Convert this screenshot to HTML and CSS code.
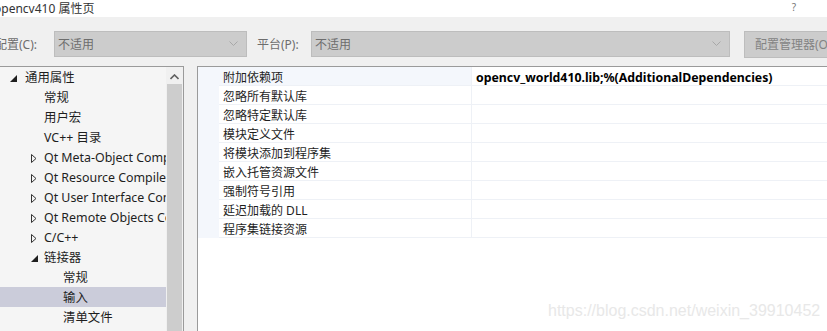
FILE: index.html
```html
<!DOCTYPE html>
<html lang="zh-CN">
<head>
    <meta charset="UTF-8">
    <title>opencv410 属性页</title>
    <link rel="stylesheet" href="styles.css">
</head>
<body>
    <!-- window title -->
    <div class="titlebar">
        <span class="title">opencv410 属性页</span>
        <span class="help">?</span>
    </div>

    <!-- configuration / platform selectors -->
    <div class="toolbar">
        <span class="tb-label cfg-label">配置(C):</span>
        <div class="combo combo-cfg">
            <span>不适用</span>
            <svg class="chevron" width="9" height="6" viewBox="0 0 9 6"><path d="M0.5 0.5 L4.5 4.5 L8.5 0.5" fill="none" stroke="#a8a8a8" stroke-width="1"/></svg>
        </div>
        <span class="tb-label plat-label">平台(P):</span>
        <div class="combo combo-plat">
            <span>不适用</span>
            <svg class="chevron" width="9" height="6" viewBox="0 0 9 6"><path d="M0.5 0.5 L4.5 4.5 L8.5 0.5" fill="none" stroke="#a8a8a8" stroke-width="1"/></svg>
        </div>
        <button class="cfg-manager">配置管理器(O)</button>
    </div>

    <div class="panes">
        <!-- property tree -->
        <div class="tree-pane">
            <ul class="tree">
                <li class="node lvl0"><svg class="exp" width="7" height="7" viewBox="0 0 7 7"><path d="M7 0 L7 7 L0 7 Z" fill="#1e1e1e"/></svg>通用属性</li>
                <li class="node lvl1">常规</li>
                <li class="node lvl1">用户宏</li>
                <li class="node lvl1">VC++ 目录</li>
                <li class="node lvl1"><svg class="col" width="6" height="9" viewBox="0 0 6 9"><path d="M0.5 0.5 L5 4.5 L0.5 8.5 Z" fill="none" stroke="#333" stroke-width="1"/></svg>Qt Meta-Object Compiler</li>
                <li class="node lvl1"><svg class="col" width="6" height="9" viewBox="0 0 6 9"><path d="M0.5 0.5 L5 4.5 L0.5 8.5 Z" fill="none" stroke="#333" stroke-width="1"/></svg>Qt Resource Compiler</li>
                <li class="node lvl1"><svg class="col" width="6" height="9" viewBox="0 0 6 9"><path d="M0.5 0.5 L5 4.5 L0.5 8.5 Z" fill="none" stroke="#333" stroke-width="1"/></svg>Qt User Interface Compiler</li>
                <li class="node lvl1"><svg class="col" width="6" height="9" viewBox="0 0 6 9"><path d="M0.5 0.5 L5 4.5 L0.5 8.5 Z" fill="none" stroke="#333" stroke-width="1"/></svg>Qt Remote Objects Compiler</li>
                <li class="node lvl1"><svg class="col" width="6" height="9" viewBox="0 0 6 9"><path d="M0.5 0.5 L5 4.5 L0.5 8.5 Z" fill="none" stroke="#333" stroke-width="1"/></svg>C/C++</li>
                <li class="node lvl1"><svg class="col exp-small" width="7" height="7" viewBox="0 0 7 7"><path d="M7 0 L7 7 L0 7 Z" fill="#1e1e1e"/></svg>链接器</li>
                <li class="node lvl2">常规</li>
                <li class="node lvl2 selected">输入</li>
                <li class="node lvl2">清单文件</li>
            </ul>
            <div class="scrollbar">
                <svg class="arrow-up" width="9" height="6" viewBox="0 0 9 6"><path d="M0.5 5 L4.5 1 L8.5 5" fill="none" stroke="#606060" stroke-width="1.6"/></svg>
                <div class="thumb"></div>
            </div>
        </div>

        <!-- property grid -->
        <div class="grid-pane">
            <div class="grid">
                <div class="gutter"></div>
                <div class="name first">附加依赖项</div><div class="value"><b>opencv_world410.lib;%(AdditionalDependencies)</b></div>
                <div class="name">忽略所有默认库</div><div class="value"></div>
                <div class="name">忽略特定默认库</div><div class="value"></div>
                <div class="name">模块定义文件</div><div class="value"></div>
                <div class="name">将模块添加到程序集</div><div class="value"></div>
                <div class="name">嵌入托管资源文件</div><div class="value"></div>
                <div class="name">强制符号引用</div><div class="value"></div>
                <div class="name">延迟加载的 DLL</div><div class="value"></div>
                <div class="name">程序集链接资源</div><div class="value"></div>
            </div>
        </div>
    </div>

    <div class="watermark">https://blog.csdn.net/weixin_39910452</div>
</body>
</html>
```

FILE: styles.css
```css
/* dialog page */
body {
    margin: 0;
    width: 827px;
    height: 331px;
    overflow: hidden;
    position: relative;
    background-color: #f0f0f0;
    font-family: "Noto Sans", "Noto Sans CJK SC", sans-serif;
    font-size: 12px;
    color: #1e1e1e;
}

.titlebar {
    height: 17px;
    background-color: #ffffff;
    display: flex;
    align-items: center;
    justify-content: space-between;
}

.title {
    margin-left: -6px;
    margin-top: -2px;
    color: #333333;
}

.help {
    margin-right: 31px;
    font-size: 10px;
    line-height: 12px;
    color: #777777;
    margin-top: -4px;
}

.toolbar {
    display: flex;
    align-items: center;
    height: 26px;
    margin-top: 14px;
    white-space: nowrap;
}

.tb-label {
    color: #6d6d6d;
    flex-shrink: 0;
}

.cfg-label {
    margin-left: -5px;
    width: 59px;
}

.plat-label {
    margin-left: 10px;
    width: 54px;
}

.combo {
    box-sizing: border-box;
    flex-shrink: 0;
    height: 26px;
    background-color: #cccccc;
    border: 1px solid #bdbdbd;
    display: flex;
    align-items: center;
    justify-content: space-between;
    padding: 0 8px 0 3px;
    color: #6d6d6d;
}

.combo-cfg {
    width: 193px;
}

.combo-plat {
    width: 419px;
}

.cfg-manager {
    box-sizing: border-box;
    margin-left: 14px;
    height: 27px;
    padding: 0 0 0 10px;
    width: 110px;
    text-align: left;
    background-color: #cccccc;
    border: 1px solid #bdbdbd;
    font-family: inherit;
    font-size: 12px;
    color: #838383;
    flex-shrink: 0;
}

.panes {
    display: flex;
    margin-top: 9px;
    height: 265px;
}

.tree-pane {
    width: 183px;
    border-top: 1px solid #9a9a9a;
    border-right: 1px solid #9a9a9a;
    display: flex;
    background-color: #f5f5f5;
}

.tree {
    list-style: none;
    margin: 0;
    padding: 0;
    width: 166px;
    overflow: hidden;
    font-size: 12.4px;
}

.node {
    box-sizing: border-box;
    height: 20px;
    padding-top: 2px;
    line-height: 18px;
    white-space: nowrap;
    display: flex;
    align-items: center;
}

.node svg {
    flex-shrink: 0;
}

.lvl0 {
    padding-left: 10px;
}

.lvl0 .exp {
    margin-right: 8px;
}

.lvl1 {
    padding-left: 44px;
}

.lvl2 {
    padding-left: 63px;
}

.col {
    margin-left: -13px;
    margin-right: 7px;
}

.exp-small {
    margin-right: 6px;
}

.selected {
    background-color: #cbccda;
}

.scrollbar {
    width: 17px;
    flex-shrink: 0;
    background-color: #f0f0f0;
    display: flex;
    flex-direction: column;
    align-items: center;
}

.arrow-up {
    margin-top: 7px;
}

.thumb {
    margin-top: 4px;
    width: 15px;
    flex: 1;
    background-color: #cdcdcd;
}

.grid-pane {
    flex: 1;
    margin-left: 13px;
    border-top: 1px solid #9a9a9a;
    border-left: 1px solid #9a9a9a;
    background-color: #ffffff;
}

.grid {
    display: grid;
    grid-template-columns: 21px 253px 1fr;
    grid-auto-rows: 19px;
}

.gutter {
    grid-row: 1 / span 9;
    background-color: #f4f7fc;
}

.name,
.value {
    box-sizing: border-box;
    border-bottom: 1px solid #eef1f6;
    padding-top: 3px;
    line-height: 15px;
    white-space: nowrap;
}

.name {
    padding-left: 4px;
    border-right: 1px solid #eef1f6;
}

.name.first {
    background-color: #f4f7fc;
}

.value {
    padding-left: 4px;
}

.value b {
    font-weight: 700;
    font-size: 12.3px;
    color: #000000;
}

.watermark {
    position: absolute;
    left: 548px;
    top: 302px;
    font-family: "Liberation Sans", sans-serif;
    font-size: 16px;
    color: #e8e8e8;
}
```
